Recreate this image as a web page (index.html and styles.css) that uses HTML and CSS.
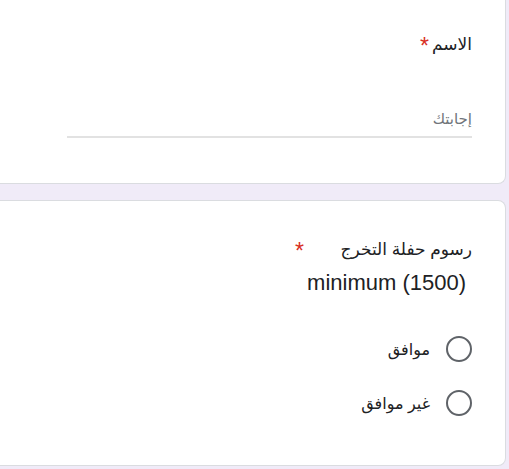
FILE: index.html
```html
<!DOCTYPE html>
<html lang="ar" dir="rtl">
<head>
<meta charset="utf-8">
<title>نموذج</title>
<link rel="stylesheet" href="styles.css">
</head>
<body>
<main class="form">
  <section class="card card-first">
    <div class="q-head">
      <div class="q-title">الاسم</div>
      <span class="req">*</span>
    </div>
    <div class="answer">
      <span class="placeholder">إجابتك</span>
    </div>
  </section>

  <section class="card card-second">
    <div class="q-head">
      <div class="q-title">
        <div class="q-line">رسوم حفلة التخرج</div>
        <div class="q-line q-line-latin"><span dir="ltr">minimum (1500)</span></div>
      </div>
      <span class="req">*</span>
    </div>
    <ul class="options">
      <li class="option"><span class="radio"></span><span class="opt-label">موافق</span></li>
      <li class="option"><span class="radio"></span><span class="opt-label">غير موافق</span></li>
    </ul>
  </section>
</main>
</body>
</html>
```

FILE: styles.css
```css
html, body {
  margin: 0;
  padding: 0;
}

body {
  background: #f0ebf8;
  font-family: "Liberation Sans", "DejaVu Sans", sans-serif;
  color: #202124;
  overflow: hidden;
  height: 469px;
}

.form {
  display: flex;
  flex-direction: column;
  gap: 16px;
  margin: 0 3px 0 0;
}

/* cards continue past the left edge of the view, so no left border */
.card {
  background: #fff;
  border: 1px solid #dadce0;
  border-left: none;
  border-radius: 0 8px 8px 0;
  padding: 0 33px 0 24px;
  box-sizing: border-box;
}

.card-first {
  border-top: none;
  border-top-right-radius: 0;
  padding-top: 32px;
  height: 184px;
}

.card-second {
  padding-top: 36px;
  height: 266px;
}

.q-head {
  display: flex;
  align-items: flex-start;
  gap: 3px;
}

.q-title {
  font-size: 17px;
  line-height: 26px;
}

.q-line-latin {
  font-size: 22px;
  line-height: 40px;
  padding-right: 6px;
}

.req {
  color: #d93025;
  font-size: 23px;
  line-height: 24px;
  margin-top: 2px;
}

.answer {
  width: 405px;
  margin-top: 49px;
  height: 31px;
  border-bottom: 2px solid #e2e2e2;
  box-sizing: border-box;
  font-size: 15px;
  line-height: 24px;
}

.placeholder {
  color: #70757a;
}

.options {
  list-style: none;
  margin: 34px 0 0;
  padding: 0;
  display: flex;
  flex-direction: column;
  gap: 30px;
}

.option {
  display: flex;
  align-items: center;
  gap: 16px;
  height: 24px;
}

.radio {
  width: 26px;
  height: 26px;
  box-sizing: border-box;
  border: 2px solid #5f6368;
  border-radius: 50%;
  flex: none;
}

.opt-label {
  font-size: 16px;
}
```
